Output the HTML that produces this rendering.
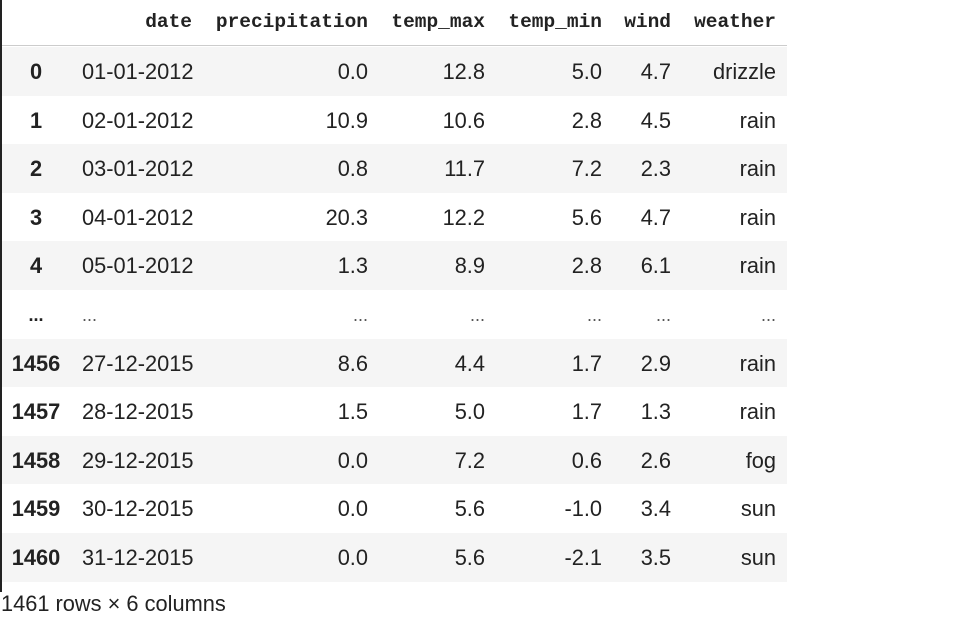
<!DOCTYPE html>
<html><head><style>
body{margin:0;width:970px;height:617px;background:#fff;position:relative;overflow:hidden;font-family:"Liberation Sans",sans-serif;color:#222}
.bl{position:absolute;left:0;top:0;width:2px;height:592px;background:#222}
.hdr{position:absolute;top:0;left:2px;width:785px;height:45px;border-bottom:1px solid #ccc}
.row{position:absolute;left:2px;width:785px;height:48.6px}
.g{background:#f5f5f5}
.c{position:absolute;white-space:nowrap;text-align:right;font-size:21.8px;line-height:50px}
.h{position:absolute;white-space:nowrap;text-align:right;font-family:"Liberation Mono",monospace;font-weight:bold;font-size:19.5px;line-height:44px;color:#222}
.i{font-weight:bold;text-align:center;left:4px;width:60px}
</style></head><body>
<div class="bl"></div>
<div class="hdr">
<span class="h" style="right:595px">date</span>
<span class="h" style="right:419px">precipitation</span>
<span class="h" style="right:302px">temp_max</span>
<span class="h" style="right:185px">temp_min</span>
<span class="h" style="right:116px">wind</span>
<span class="h" style="right:11px">weather</span>
</div>
<div id="rows"></div>
<script>
var d=[["0","01-01-2012","0.0","12.8","5.0","4.7","drizzle"],["1","02-01-2012","10.9","10.6","2.8","4.5","rain"],["2","03-01-2012","0.8","11.7","7.2","2.3","rain"],["3","04-01-2012","20.3","12.2","5.6","4.7","rain"],["4","05-01-2012","1.3","8.9","2.8","6.1","rain"],["...","...","...","...","...","...","..."],["1456","27-12-2015","8.6","4.4","1.7","2.9","rain"],["1457","28-12-2015","1.5","5.0","1.7","1.3","rain"],["1458","29-12-2015","0.0","7.2","0.6","2.6","fog"],["1459","30-12-2015","0.0","5.6","-1.0","3.4","sun"],["1460","31-12-2015","0.0","5.6","-2.1","3.5","sun"]];
var r=[595,419,302,185,116,11],h="";
d.forEach(function(x,k){var t=47+k*48.6;h+='<div class="row'+(k%2==0?' g':'')+'" style="top:'+t+'px"><span class="c i"'+(x[0]=="..."?' style="font-size:18px"':'')+'>'+x[0]+'</span>';
for(var j=1;j<7;j++){h+='<span class="c" style="right:'+r[j-1]+'px;'+(j==1?'right:auto;left:80px;':'')+(x[j]=="..."?'color:#555;font-size:18px;':'')+'">'+x[j]+'</span>';}
h+='</div>';});
document.getElementById('rows').innerHTML=h;
</script>
<div style="position:absolute;left:1px;top:591px;font-size:21.8px;line-height:26px">1461 rows × 6 columns</div>
</body></html>
